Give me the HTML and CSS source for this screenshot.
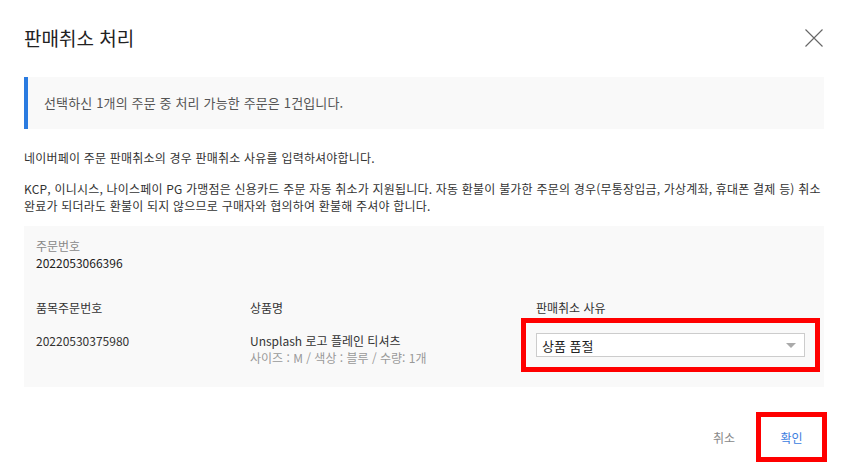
FILE: index.html
```html
<!DOCTYPE html>
<html lang="ko">
  <head>
    <meta charset="utf-8" />
    <title>판매취소 처리</title>
    <link rel="stylesheet" href="styles.css">
  </head>
  <body>
    <div class="modal">
      <div class="modal-header">
        <h1>판매취소 처리</h1>
        <button class="close" aria-label="닫기">
          <svg width="18" height="18" viewBox="0 0 18 18">
            <path d="M0.5 0.5 L17.5 17.5 M17.5 0.5 L0.5 17.5" stroke="#666" stroke-width="1.1" fill="none" />
          </svg>
        </button>
      </div>

      <div class="info">선택하신 1개의 주문 중 처리 가능한 주문은 1건입니다.</div>

      <p class="notice">네이버페이 주문 판매취소의 경우 판매취소 사유를 입력하셔야합니다.</p>
      <p class="notice">KCP, 이니시스, 나이스페이 PG 가맹점은 신용카드 주문 자동 취소가 지원됩니다. 자동 환불이 불가한 주문의 경우(무통장입금, 가상계좌, 휴대폰 결제 등) 취소 완료가 되더라도 환불이 되지 않으므로 구매자와 협의하여 환불해 주셔야 합니다.</p>

      <div class="order">
        <div class="order-no">
          <span class="label">주문번호</span>
          <span class="value">2022053066396</span>
        </div>
        <div class="items">
          <div class="th">품목주문번호</div>
          <div class="th">상품명</div>
          <div class="th">판매취소 사유</div>
          <div class="td">20220530375980</div>
          <div class="td">
            <div>Unsplash 로고 플레인 티셔츠</div>
            <div class="option">사이즈 : M / 색상 : 블루 / 수량: 1개</div>
          </div>
          <div class="td">
            <div class="select">
              <span>상품 품절</span>
              <i class="caret"></i>
            </div>
          </div>
        </div>
      </div>

      <div class="modal-footer">
        <button class="btn">취소</button>
        <button class="btn primary">확인</button>
      </div>
    </div>
  </body>
</html>
```

FILE: styles.css
```css
body {
  margin: 0;
  background: #fff;
  font-family: "Noto Sans CJK KR", "Noto Sans", sans-serif;
  color: #333;
  word-break: keep-all;
}
.modal {
  padding: 0 24px;
}
.modal-header {
  display: flex;
  align-items: center;
  justify-content: space-between;
  height: 77px;
}
.modal-header h1 {
  margin: 0;
  font-size: 19px;
  font-weight: 400;
  color: #222;
  line-height: 26px;
  padding-bottom: 2px;
}
.close {
  border: 0;
  background: none;
  padding: 0;
  margin-right: 1px;
  margin-bottom: 1px;
  width: 18px;
  height: 18px;
  cursor: pointer;
}
.close svg {
  display: block;
}

.info {
  background: #f9f9f9;
  border-left: 4px solid #2a7be0;
  height: 52px;
  line-height: 52px;
  padding-left: 16px;
  font-size: 13px;
  letter-spacing: 0.15px;
  color: #555;
}

.notice {
  margin: 0;
  font-size: 12px;
  line-height: 17px;
  letter-spacing: 0.2px;
  color: #333;
}
.info + .notice {
  margin-top: 20px;
}
.notice + .notice {
  margin-top: 14px;
}

.order {
  margin-top: 12px;
  background: #f9f9f9;
  padding: 11px 20px 21px 12px;
}
.order-no {
  display: flex;
  flex-direction: column;
  font-size: 12px;
  line-height: 17px;
}
.order-no .label {
  color: #888;
}
.order-no .value {
  color: #222;
}
.items {
  display: grid;
  grid-template-columns: 214px 286px 1fr;
  margin-top: 28px;
  font-size: 12px;
  line-height: 17px;
}
.th {
  color: #333;
  padding-bottom: 16px;
}
.td {
  color: #333;
}
.option {
  color: #999;
}
.select {
  position: relative;
  display: flex;
  align-items: center;
  width: 269px;
  height: 24px;
  box-sizing: border-box;
  border: 1px solid #ccc;
  background: #fff;
  padding-left: 5px;
  font-size: 13px;
  color: #222;
  margin-top: 1px;
  outline: 5px solid #f00;
  outline-offset: 10px;
}
.caret {
  position: absolute;
  right: 8px;
  top: 9px;
  width: 0;
  height: 0;
  border-left: 5px solid transparent;
  border-right: 5px solid transparent;
  border-top: 5px solid #aaa;
}

.modal-footer {
  display: flex;
  justify-content: flex-end;
  align-items: center;
  gap: 21px;
  margin-top: 25px;
  margin-right: -3px;
}
.btn {
  border: 0;
  background: none;
  font-family: inherit;
  font-size: 12px;
  color: #888;
  padding: 0;
  cursor: pointer;
}
.btn.primary {
  width: 71px;
  height: 50px;
  border: 5px solid #f00;
  color: #3a7de0;
}
```
